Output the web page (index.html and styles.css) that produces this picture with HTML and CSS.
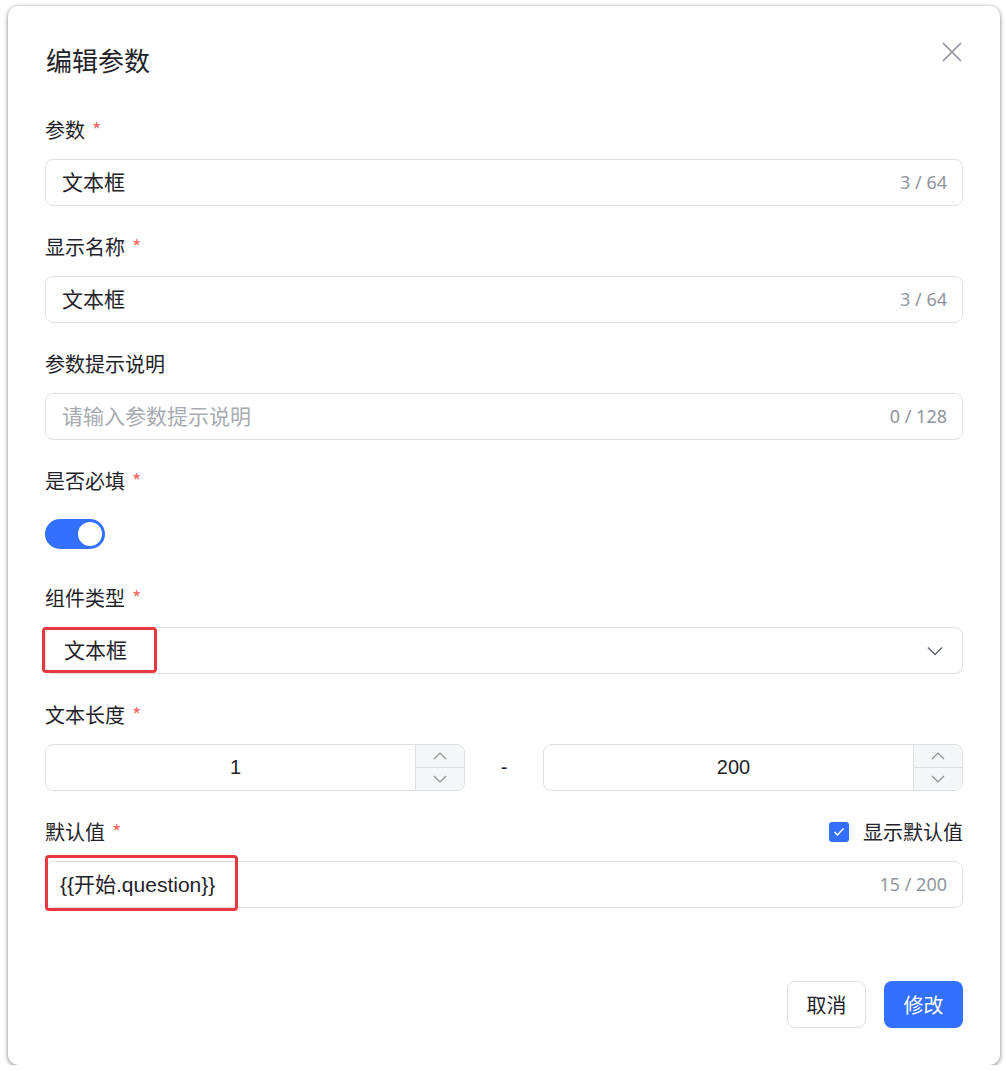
FILE: index.html
```html
<!DOCTYPE html>
<html lang="zh-CN">
<head>
    <meta charset="UTF-8">
    <meta name="viewport" content="width=device-width, initial-scale=1.0">
    <title>编辑参数</title>
    <link rel="stylesheet" href="styles.css">
</head>
<body>
    <div class="dialog">
        <div class="dialog-header">
            <h2 class="dialog-title">编辑参数</h2>
            <button class="close-btn" aria-label="关闭">
                <svg width="20" height="20" viewBox="0 0 20 20"><path d="M1 1L19 19M19 1L1 19" stroke="#8a8f99" stroke-width="1.6" fill="none"/></svg>
            </button>
        </div>

        <div class="form-item">
            <label class="form-label">参数<span class="req">*</span></label>
            <div class="input">
                <span class="input-value">文本框</span>
                <span class="counter">3 / 64</span>
            </div>
        </div>

        <div class="form-item">
            <label class="form-label">显示名称<span class="req">*</span></label>
            <div class="input">
                <span class="input-value">文本框</span>
                <span class="counter">3 / 64</span>
            </div>
        </div>

        <div class="form-item">
            <label class="form-label">参数提示说明</label>
            <div class="input">
                <span class="input-value placeholder">请输入参数提示说明</span>
                <span class="counter">0 / 128</span>
            </div>
        </div>

        <div class="form-item">
            <label class="form-label">是否必填<span class="req">*</span></label>
            <div class="switch-row">
                <span class="switch"><span class="switch-knob"></span></span>
            </div>
        </div>

        <div class="form-item">
            <label class="form-label">组件类型<span class="req">*</span></label>
            <div class="input select">
                <span class="input-value">文本框</span>
                <svg width="16" height="10" viewBox="0 0 16 10"><path d="M1 1.5L8 8.5L15 1.5" stroke="#646a73" stroke-width="1.5" fill="none"/></svg>
                <span class="mark mark-select"></span>
            </div>
        </div>

        <div class="form-item">
            <label class="form-label">文本长度<span class="req">*</span></label>
            <div class="range-row">
                <div class="number-input">
                    <span class="number-value">1</span>
                    <div class="spinner">
                        <span class="spin-btn"><svg width="14" height="8" viewBox="0 0 14 8"><path d="M1 7L7 1L13 7" stroke="#8a8f99" stroke-width="1.2" fill="none"/></svg></span>
                        <span class="spin-btn"><svg width="14" height="8" viewBox="0 0 14 8"><path d="M1 1L7 7L13 1" stroke="#8a8f99" stroke-width="1.2" fill="none"/></svg></span>
                    </div>
                </div>
                <span class="range-dash">-</span>
                <div class="number-input">
                    <span class="number-value">200</span>
                    <div class="spinner">
                        <span class="spin-btn"><svg width="14" height="8" viewBox="0 0 14 8"><path d="M1 7L7 1L13 7" stroke="#8a8f99" stroke-width="1.2" fill="none"/></svg></span>
                        <span class="spin-btn"><svg width="14" height="8" viewBox="0 0 14 8"><path d="M1 1L7 7L13 1" stroke="#8a8f99" stroke-width="1.2" fill="none"/></svg></span>
                    </div>
                </div>
            </div>
        </div>

        <div class="form-item">
            <div class="label-row">
                <label class="form-label">默认值<span class="req">*</span></label>
                <label class="checkbox">
                    <span class="checkbox-box">
                        <svg width="12" height="10" viewBox="0 0 12 10"><path d="M1.5 5L4.5 8L10.5 1.5" stroke="#fff" stroke-width="1.5" fill="none"/></svg>
                    </span>
                    显示默认值
                </label>
            </div>
            <div class="input">
                <span class="input-value latin">{{开始.question}}</span>
                <span class="counter">15 / 200</span>
                <span class="mark mark-default"></span>
            </div>
        </div>

        <div class="dialog-footer">
            <button class="btn btn-cancel">取消</button>
            <button class="btn btn-primary">修改</button>
        </div>
    </div>
</body>
</html>
```

FILE: styles.css
```css
body {
    margin: 0;
    padding: 0;
    background-color: #fff;
    font-family: "Noto Sans", "Noto Sans CJK SC", sans-serif;
    color: #1f2329;
}

.dialog {
    box-sizing: border-box;
    width: 992px;
    height: 1059px;
    margin: 6px 0 0 8px;
    padding: 36px 37px 37px 37px;
    background-color: #fff;
    border-radius: 10px;
    box-shadow: 0 1px 4px rgba(0, 0, 0, 0.55);
    display: flex;
    flex-direction: column;
}

.dialog-header {
    display: flex;
    justify-content: space-between;
    align-items: center;
    height: 36px;
    margin-bottom: 38px;
}

.dialog-title {
    margin: 0 0 0 1px;
    font-size: 26px;
    font-weight: 400;
    line-height: 36px;
    font-family: "Noto Sans CJK SC", sans-serif;
}

.close-btn {
    border: none;
    background: none;
    padding: 0;
    margin: -16px -1px 0 0;
    width: 24px;
    height: 24px;
    display: flex;
    align-items: center;
    justify-content: center;
    cursor: pointer;
}

.form-item {
    margin-bottom: 27px;
}

.form-label {
    display: block;
    height: 28px;
    font-size: 20px;
    line-height: 28px;
    margin: 0 0 15px 0;
    font-family: "Noto Sans CJK SC", sans-serif;
}

.req {
    display: inline-block;
    margin-left: 7px;
    color: #f76964;
    font-size: 20px;
    line-height: 28px;
    vertical-align: top;
}

.input {
    position: relative;
    box-sizing: border-box;
    height: 47px;
    border: 1px solid #dee0e3;
    border-radius: 8px;
    padding: 0 15px 0 16px;
    display: flex;
    align-items: center;
    justify-content: space-between;
}

.input-value {
    font-size: 21px;
    margin-bottom: 3px;
    font-family: "Noto Sans CJK SC", sans-serif;
}

.input-value.placeholder {
    color: #a7abb2;
}

.input-value.latin {
    font-family: "Liberation Sans", "Noto Sans CJK SC", sans-serif;
    margin-left: -2px;
}

.counter {
    font-size: 18px;
    margin-bottom: 2px;
    color: #8f959e;
    font-family: "Noto Sans", sans-serif;
}

.select {
    padding-right: 19px;
    padding-left: 18px;
}

.switch-row {
    height: 47px;
    display: flex;
    align-items: center;
}

.switch {
    box-sizing: border-box;
    width: 60px;
    height: 30px;
    border-radius: 15px;
    background-color: #3370ff;
    display: flex;
    justify-content: flex-end;
    align-items: center;
    padding-right: 3px;
}

.switch-knob {
    width: 24px;
    height: 24px;
    border-radius: 50%;
    background-color: #fff;
}

.mark {
    position: absolute;
    border: 3px solid #e8383d;
    border-radius: 4px;
    pointer-events: none;
}

.mark-select {
    left: -4px;
    top: -1px;
    width: 109px;
    height: 40px;
}

.mark-default {
    left: -1px;
    top: -7px;
    width: 187px;
    height: 50px;
}

.range-row {
    display: grid;
    grid-template-columns: 1fr 78px 1fr;
    align-items: center;
}

.range-dash {
    text-align: center;
    font-size: 20px;
    font-family: "Liberation Sans", sans-serif;
}

.number-input {
    box-sizing: border-box;
    height: 47px;
    border: 1px solid #dee0e3;
    border-radius: 8px;
    display: flex;
    overflow: hidden;
}

.number-value {
    flex: 1;
    display: flex;
    align-items: center;
    justify-content: center;
    padding-left: 10px;
    font-size: 20px;
    font-family: "Liberation Sans", sans-serif;
}

.spinner {
    width: 48px;
    border-left: 1px solid #dee0e3;
    background-color: #f5f6f7;
    display: flex;
    flex-direction: column;
}

.spin-btn {
    flex: 1;
    display: flex;
    align-items: center;
    justify-content: center;
}

.spin-btn + .spin-btn {
    border-top: 1px solid #dee0e3;
}

.label-row {
    display: flex;
    justify-content: space-between;
    align-items: flex-start;
}

.checkbox {
    display: flex;
    align-items: center;
    gap: 14px;
    height: 28px;
    font-size: 20px;
    line-height: 28px;
    font-family: "Noto Sans CJK SC", sans-serif;
}

.checkbox-box {
    width: 20px;
    height: 20px;
    border-radius: 3px;
    background-color: #3370ff;
    display: flex;
    align-items: center;
    justify-content: center;
}

.dialog-footer {
    margin-top: auto;
    display: flex;
    justify-content: flex-end;
    gap: 18px;
}

.btn {
    box-sizing: border-box;
    width: 79px;
    height: 47px;
    border-radius: 8px;
    font-size: 20px;
    font-family: "Noto Sans CJK SC", sans-serif;
    cursor: pointer;
}

.btn-cancel {
    background-color: #fff;
    border: 1px solid #dee0e3;
    color: #1f2329;
}

.btn-primary {
    background-color: #3370ff;
    border: none;
    color: #fff;
}
```
